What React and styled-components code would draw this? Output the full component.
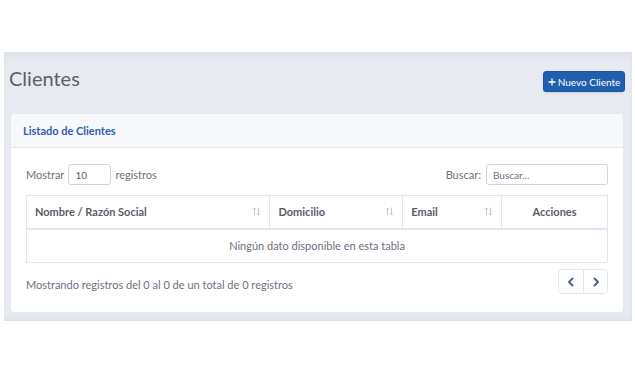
import React from "react";
import styled, { createGlobalStyle } from "styled-components";

const Global = createGlobalStyle`
  html, body { margin: 0; padding: 0; background: #ffffff; }
  body { font-family: Lato, "Open Sans", sans-serif; color: #6e707e; }
  * { box-sizing: border-box; }
`;

const Page = styled.div`
  padding: 52px 3px 0 4px;
`;

const Panel = styled.section`
  background: #e8eaf1;
  box-shadow: inset 0 6px 10px -6px rgba(60, 64, 90, 0.12), inset 0 -4px 8px -4px rgba(60, 64, 90, 0.08);
  padding: 14px 7px 8px 5px;
`;

const TitleRow = styled.div`
  display: flex;
  justify-content: space-between;
  align-items: flex-start;
  margin-bottom: 21px;
`;

const Title = styled.h1`
  margin: 0;
  font-size: 20px;
  line-height: 24px;
  font-weight: 400;
  color: #5d5f67;
`;

const PrimaryButton = styled.button`
  margin-top: 5px;
  height: 21px;
  width: 82px;
  padding: 0;
  border: 1px solid #1b58a3;
  border-radius: 3px;
  background: #1f5fae;
  color: #ffffff;
  font-family: Lato, sans-serif;
  font-size: 10px;
  display: flex;
  align-items: center;
  justify-content: center;
  gap: 2px;
  box-shadow: 0 1px 2px rgba(0, 0, 0, 0.12);
`;

const Card = styled.div`
  margin: 0 1px;
  background: #ffffff;
  border: 1px solid #e6e8ef;
  border-radius: 4px;
  overflow: hidden;
`;

const CardHeader = styled.div`
  height: 34px;
  background: #f7f8fc;
  border-bottom: 1px solid #e3e6f0;
  display: flex;
  align-items: center;
  padding-left: 12px;
  font-size: 11px;
  font-weight: 700;
  color: #2f5fae;
`;

const CardBody = styled.div`
  padding: 16px 15px 18px 15px;
`;

const ControlsRow = styled.div`
  display: flex;
  justify-content: space-between;
  align-items: center;
  font-size: 11px;
  height: 21px;
`;

const Label = styled.label`
  display: flex;
  align-items: center;
  gap: ${(p) => p.$gap || 4}px;
`;

const Input = styled.input`
  height: 21px;
  width: ${(p) => p.$w}px;
  border: 1px solid #d1d3e2;
  border-radius: 3px;
  padding: 0 6px;
  font-family: Lato, sans-serif;
  font-size: 10px;
  color: #5a5c69;
  outline: none;
  &::placeholder { color: #6e707e; }
`;

const Table = styled.table`
  margin-top: 10px;
  width: 100%;
  border-collapse: collapse;
  font-size: 11px;
`;

const Th = styled.th`
  border: 1px solid #e3e6f0;
  border-bottom-width: 2px;
  height: 33px;
  padding: 0 8px;
  text-align: ${(p) => (p.$center ? "center" : "left")};
  font-weight: 700;
  color: #5a5c69;
  width: ${(p) => p.$w}px;
`;

const ThInner = styled.div`
  display: flex;
  align-items: center;
  justify-content: ${(p) => (p.$center ? "center" : "space-between")};
`;

const Td = styled.td`
  border: 1px solid #e3e6f0;
  height: 34px;
  text-align: center;
  color: #6e707e;
`;

const Footer = styled.div`
  margin-top: 6px;
  display: flex;
  justify-content: space-between;
  align-items: flex-start;
  font-size: 11px;
`;

const FooterInfo = styled.span`
  padding-top: 9px;
`;

const Pager = styled.div`
  display: flex;
  border: 1px solid #e3e6f0;
  border-radius: 4px;
  height: 25px;
`;

const PageBtn = styled.div`
  width: 24px;
  display: flex;
  align-items: center;
  justify-content: center;
  & + & { border-left: 1px solid #e3e6f0; }
`;

const SortIcon = () => (
  <svg width="9" height="9" viewBox="0 0 9 9" fill="none" stroke="#c3c6d4" strokeWidth="1">
    <path d="M2.5 8.5V1M1 2.5l1.5-1.5 1.5 1.5" />
    <path d="M6.5 0.5V8M5 6.5l1.5 1.5 1.5-1.5" />
  </svg>
);

const Chevron = ({ dir }) => (
  <svg width="10" height="10" viewBox="0 0 10 10" fill="none" stroke="#4f6188" strokeWidth="2" strokeLinecap="round" strokeLinejoin="round">
    {dir === "left" ? <path d="M6.5 1.5L3 5l3.5 3.5" /> : <path d="M3.5 1.5L7 5 3.5 8.5" />}
  </svg>
);

const columns = [
  { label: "Nombre / Razón Social", w: 244, sort: true },
  { label: "Domicilio", w: 133, sort: true },
  { label: "Email", w: 99, sort: true },
  { label: "Acciones", w: 106, center: true },
];

export default function App() {
  return (
    <>
      <Global />
      <Page>
        <Panel>
          <TitleRow>
            <Title>Clientes</Title>
            <PrimaryButton>
              <svg width="8" height="8" viewBox="0 0 8 8" stroke="#fff" strokeWidth="1.3">
                <path d="M4 0.5v7M0.5 4h7" />
              </svg>
              Nuevo Cliente
            </PrimaryButton>
          </TitleRow>
          <Card>
            <CardHeader>Listado de Clientes</CardHeader>
            <CardBody>
              <ControlsRow>
                <Label>
                  Mostrar <Input $w={43} defaultValue="10" /> registros
                </Label>
                <Label $gap={5}>
                  Buscar: <Input $w={122} placeholder="Buscar..." />
                </Label>
              </ControlsRow>
              <Table>
                <thead>
                  <tr>
                    {columns.map((c) => (
                      <Th key={c.label} $w={c.w} $center={c.center}>
                        <ThInner $center={c.center}>
                          {c.label}
                          {c.sort && <SortIcon />}
                        </ThInner>
                      </Th>
                    ))}
                  </tr>
                </thead>
                <tbody>
                  <tr>
                    <Td colSpan={4}>Ningún dato disponible en esta tabla</Td>
                  </tr>
                </tbody>
              </Table>
              <Footer>
                <FooterInfo>Mostrando registros del 0 al 0 de un total de 0 registros</FooterInfo>
                <Pager>
                  <PageBtn><Chevron dir="left" /></PageBtn>
                  <PageBtn><Chevron dir="right" /></PageBtn>
                </Pager>
              </Footer>
            </CardBody>
          </Card>
        </Panel>
      </Page>
    </>
  );
}
